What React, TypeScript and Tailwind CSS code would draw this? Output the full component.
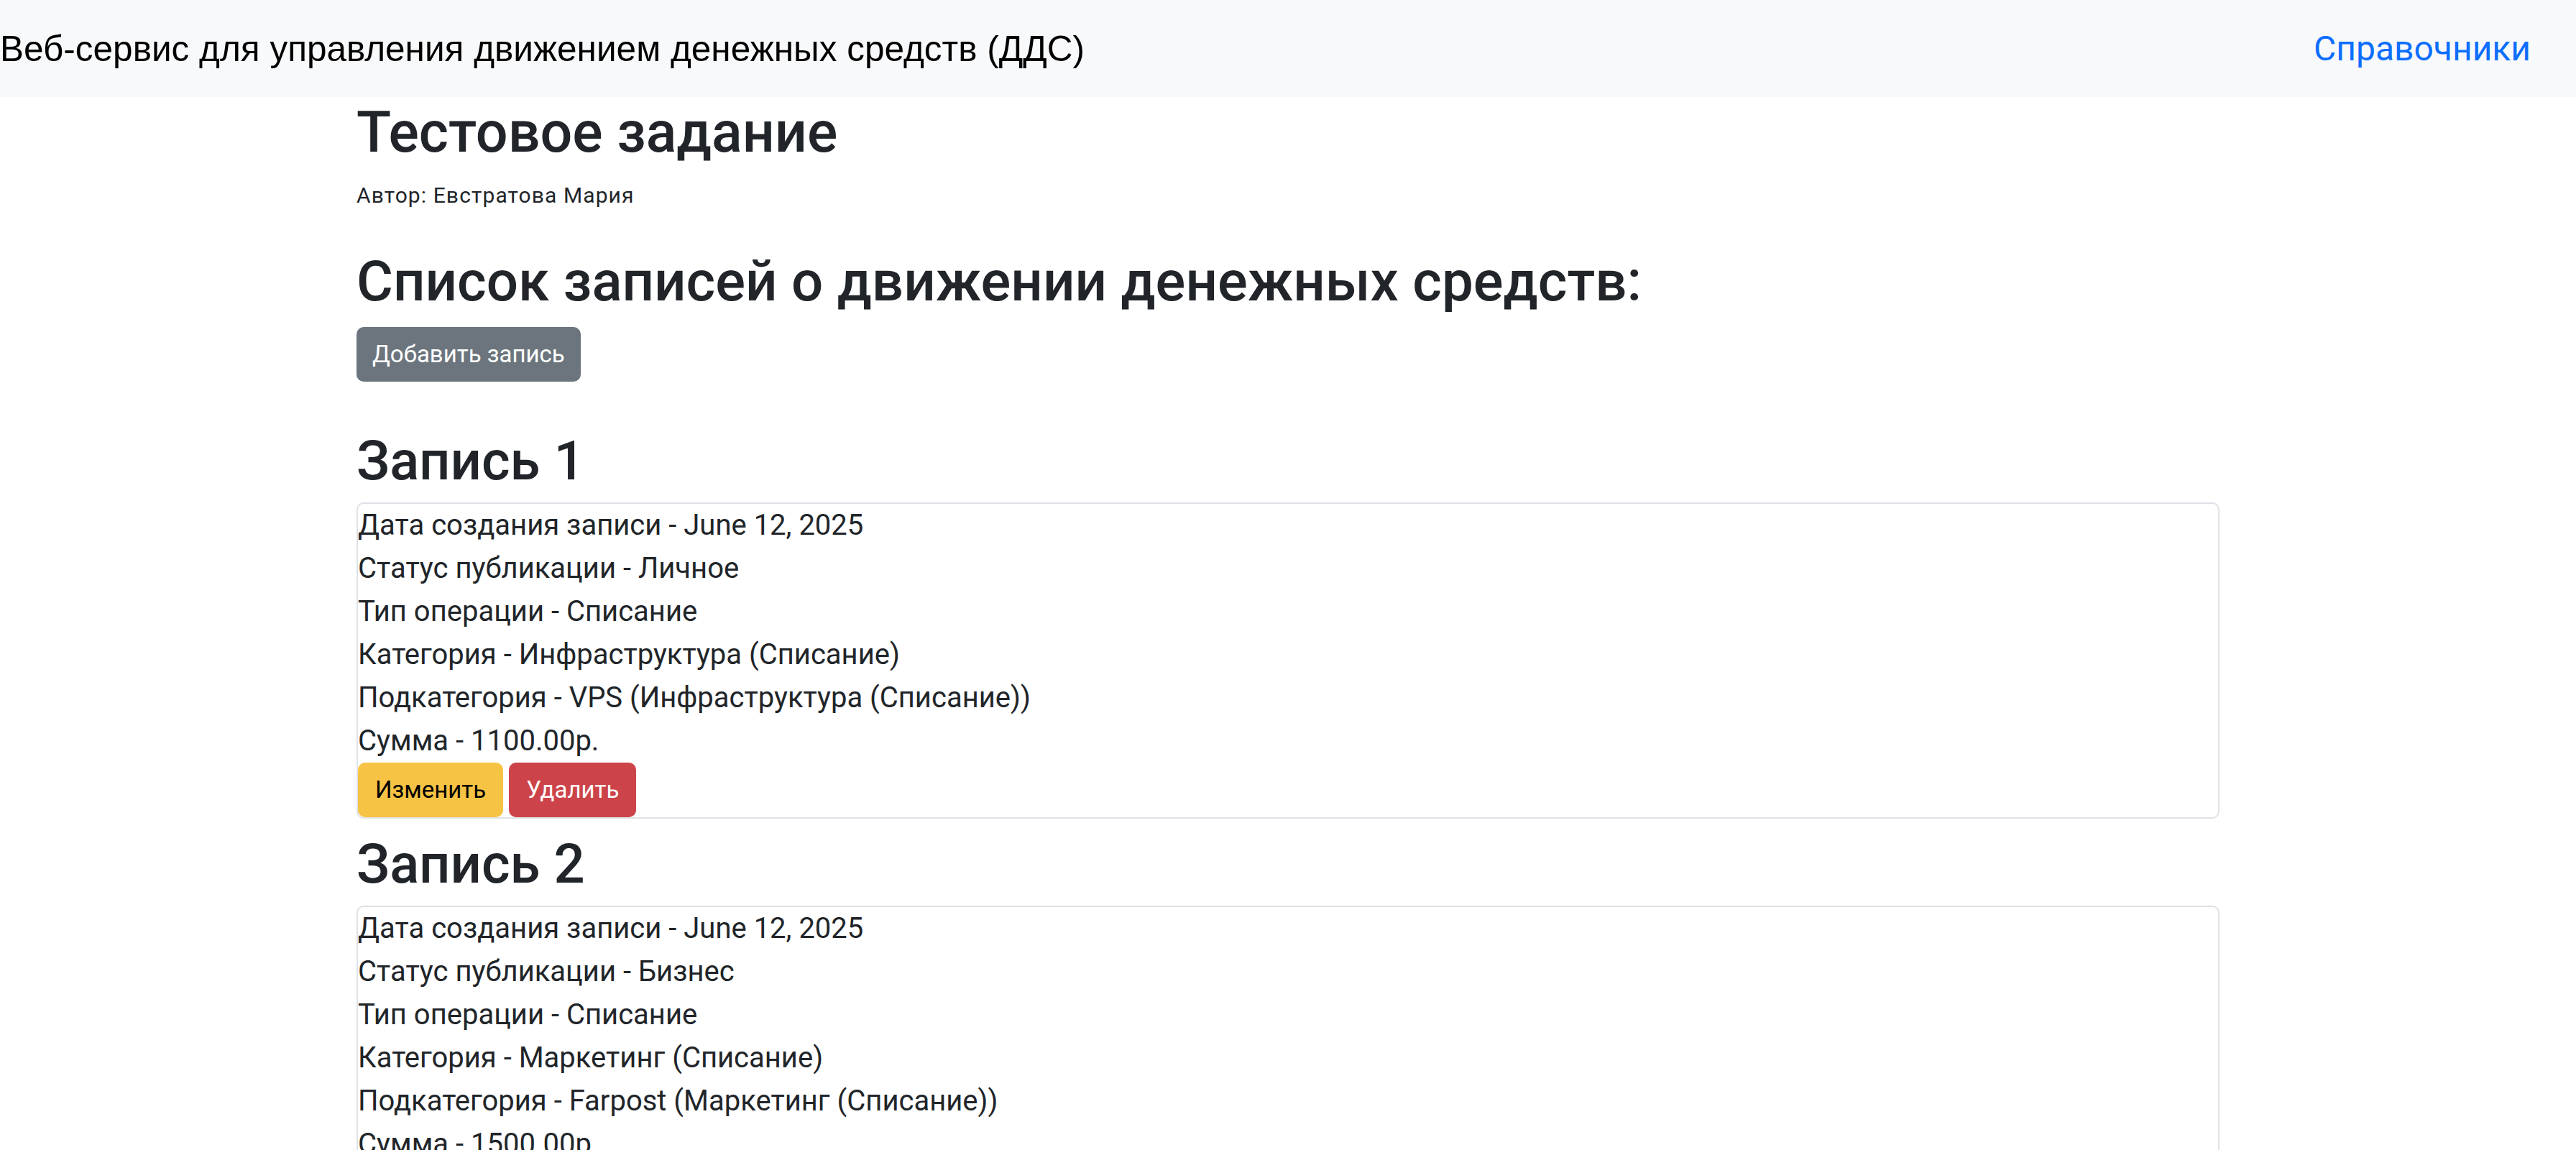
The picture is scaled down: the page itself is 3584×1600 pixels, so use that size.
import React from 'react';

type Entry = {
  date: string;
  status: string;
  kind: string;
  category: string;
  subcategory: string;
  amount: string;
};

const entries: Entry[] = [
  {
    date: 'June 12, 2025',
    status: 'Личное',
    kind: 'Списание',
    category: 'Инфраструктура (Списание)',
    subcategory: 'VPS (Инфраструктура (Списание))',
    amount: '1100.00р.',
  },
  {
    date: 'June 12, 2025',
    status: 'Бизнес',
    kind: 'Списание',
    category: 'Маркетинг (Списание)',
    subcategory: 'Farpost (Маркетинг (Списание))',
    amount: '1500.00р.',
  },
];

function EntryCard({ entry, index }: { entry: Entry; index: number }) {
  return (
    <div className="flex flex-col">
      <h3 className="mt-[15px] mb-[10px] text-[76px] leading-[96px] font-medium">
        Запись {index + 1}
      </h3>
      <div className="rounded-[10px] border-2 border-[#dee2e6] text-[40px] leading-[60px]">
        <div>Дата создания записи - {entry.date}</div>
        <div>Статус публикации - {entry.status}</div>
        <div>Тип операции - {entry.kind}</div>
        <div>Категория - {entry.category}</div>
        <div>Подкатегория - {entry.subcategory}</div>
        <div>Сумма - {entry.amount}</div>
        <div className="flex gap-2">
          <button className="flex h-[76px] items-center rounded-[10px] bg-[#f6c344] px-[24px] text-[33px] text-black">
            Изменить
          </button>
          <button className="flex h-[76px] items-center rounded-[10px] bg-[#cc4349] px-[24px] text-[33px] text-white">
            Удалить
          </button>
        </div>
      </div>
    </div>
  );
}

function App() {
  return (
    <div className="min-h-screen bg-white font-['Roboto',sans-serif] text-[#212529]">
      <nav className="flex h-[135px] items-center justify-between bg-[#f8f9fa] pr-[63px]">
        <span className="font-['Liberation_Sans',Arial,sans-serif] text-[49.5px] leading-[75px] text-black">
          Веб-сервис для управления движением денежных средств (ДДС)
        </span>
        <a href="#" className="text-[48px] leading-[75px] text-[#0d6efd]">
          Справочники
        </a>
      </nav>

      <main className="mx-auto w-[2592px]">
        <h1 className="text-[79px] leading-[98px] font-medium">Тестовое задание</h1>
        <p className="mt-[19px] text-[30px] leading-[40px] tracking-[1.1px]">Автор: Евстратова Мария</p>

        <h2 className="mt-[57px] text-[78px] leading-[86px] font-medium">
          Список записей о движении денежных средств:
        </h2>
        <button className="mt-5 flex h-[76px] items-center rounded-[10px] bg-[#6c757d] px-[22px] text-[33px] text-white">
          Добавить запись
        </button>

        <div className="mt-[47px] flex flex-col">
          {entries.map((entry, i) => (
            <EntryCard key={i} entry={entry} index={i} />
          ))}
        </div>
      </main>
    </div>
  );
}

export default App;
